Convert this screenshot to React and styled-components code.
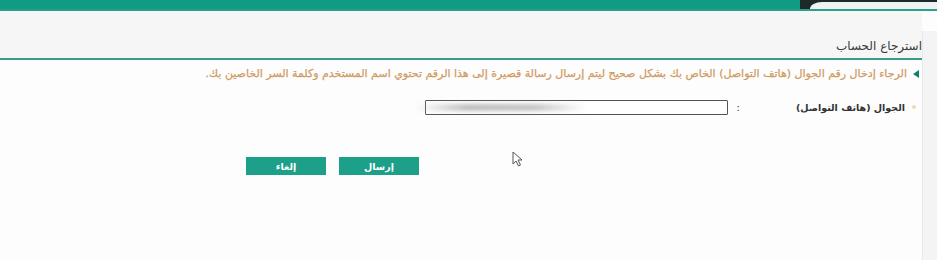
import React from "react";
import styled, { createGlobalStyle } from "styled-components";

const Global = createGlobalStyle`
  html, body { margin: 0; padding: 0; background: #fdfdfd; }
  body { font-family: "DejaVu Sans", "Noto Sans", sans-serif; width: 937px; height: 260px; overflow: hidden; }
`;

const Page = styled.div`
  position: relative;
  display: flex;
  flex-direction: column;
  width: 937px;
  height: 260px;
`;

const TopBar = styled.div`
  position: relative;
  height: 9px;
  background: #0f9b84;
  border-bottom: 2px solid #2aa08c;
  flex-shrink: 0;
`;

const SearchTab = styled.div`
  position: absolute;
  right: 0;
  top: 0;
  width: 137px;
  height: 9px;
  background: #1d2a2a;
  &::after {
    content: "";
    position: absolute;
    right: 0;
    top: 2px;
    width: 127px;
    height: 7px;
    background: #f1f3f2;
    border-top-left-radius: 12px 7px;
  }
`;

const Body = styled.div`
  flex: 1;
  display: flex;
  flex-direction: row;
  direction: rtl;
`;

const Scroll = styled.div`
  width: 14px;
  flex-shrink: 0;
  background: #f4f4f5;
  border-left: 1px solid #e8e8ea;
  margin-top: 20px;
`;

const Main = styled.div`
  flex: 1;
  display: flex;
  flex-direction: column;
`;

const Header = styled.div`
  background: #f6f6f6;
  height: 49px;
  display: flex;
  align-items: flex-end;
  padding-bottom: 5px;
  box-sizing: border-box;
  border-bottom: 2px solid #3a9d8b;
`;

const Title = styled.h1`
  margin: 0 0 0 0;
  font-size: 12px;
  font-weight: normal;
  color: #3a3a3a;
`;

const Notice = styled.div`
  display: flex;
  align-items: flex-start;
  gap: 6px;
  padding: 7px 3px 0 0;
  font-size: 11px;
  line-height: 14px;
  color: #d19a62;
`;

const Arrow = styled.span`
  width: 0;
  height: 0;
  border-top: 4px solid transparent;
  border-bottom: 4px solid transparent;
  border-right: 6px solid #10806e;
  margin-top: 3px;
  flex-shrink: 0;
`;

const NoticeText = styled.p`
  margin: 0;
  white-space: nowrap;
  -webkit-text-stroke: 0.25px #d19a62;
`;

const FieldRow = styled.div`
  display: flex;
  align-items: center;
  padding: 19px 6px 0 0;
  height: 14px;
`;

const Dot = styled.span`
  width: 4px;
  height: 4px;
  border-radius: 50%;
  background: #f0d9b8;
  margin-left: 7px;
`;

const Label = styled.label`
  font-size: 9.5px;
  font-weight: bold;
  color: #333;
  width: 165px;
`;

const Colon = styled.span`
  font-size: 11px;
  color: #444;
  width: 12px;
`;

const Input = styled.div`
  width: 301px;
  height: 13px;
  border: 1px solid #555;
  border-radius: 1px;
  background: #fff;
  position: relative;
`;

const Blur = styled.div`
  position: absolute;
  left: -10px;
  top: 3px;
  width: 170px;
  height: 7px;
  background: linear-gradient(to right, rgba(180,180,180,0) 0%, #bdbdbd 30%, #c4c4c4 70%, rgba(200,200,200,0));
  filter: blur(2px);
  border-radius: 4px;
`;

const Buttons = styled.div`
  display: flex;
  gap: 13px;
  padding: 43px 503px 0 0;
`;

const Button = styled.button`
  width: 80px;
  height: 18px;
  border: none;
  background: #1ca089;
  color: #fff;
  font-family: "DejaVu Sans", sans-serif;
  font-size: 9.5px;
  font-weight: bold;
  padding: 0;
  cursor: pointer;
`;

const Cursor = styled.svg`
  position: absolute;
  left: 512px;
  top: 151px;
`;

export default function App() {
  return (
    <>
      <Global />
      <Page>
        <TopBar>
          <SearchTab />
        </TopBar>
        <Body>
          <Scroll />
          <Main>
            <Header>
              <Title>استرجاع الحساب</Title>
            </Header>
            <Notice>
              <Arrow />
              <NoticeText>
                الرجاء إدخال رقم الجوال (هاتف التواصل) الخاص بك بشكل صحيح ليتم إرسال رسالة قصيرة إلى هذا الرقم تحتوي اسم المستخدم وكلمة السر الخاصين بك.
              </NoticeText>
            </Notice>
            <FieldRow>
              <Dot />
              <Label>الجوال (هاتف التواصل)</Label>
              <Colon>:</Colon>
              <Input>
                <Blur />
              </Input>
            </FieldRow>
            <Buttons>
              <Button>إرسال</Button>
              <Button>إلغاء</Button>
            </Buttons>
          </Main>
        </Body>
        <Cursor width="12" height="16" viewBox="0 0 12 16">
          <path d="M1 1 L1 13 L4 10 L6.5 15 L8.5 14 L6 9 L10 9 Z" fill="#fff" stroke="#555" strokeWidth="1" strokeLinejoin="round" />
        </Cursor>
      </Page>
    </>
  );
}
